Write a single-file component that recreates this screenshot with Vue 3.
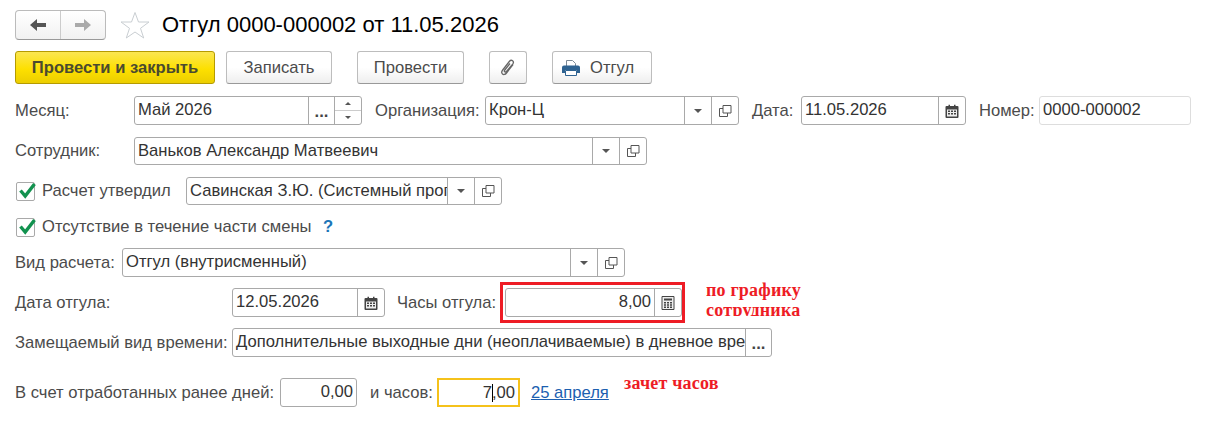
<template>
  <div class="page">
    <!-- иконки -->
    <svg class="defs" width="0" height="0">
      <symbol id="i-open" viewBox="0 0 14 14">
        <path d="M5 4.500H1.500v8h8V9" fill="none" stroke="#555" stroke-width="1" />
        <path d="M5 1.500h8v7.500H5z" fill="#fff" stroke="#555" stroke-width="1" />
      </symbol>
      <symbol id="i-cal" viewBox="0 0 13 14">
        <path d="M1 2h2V.7h1.500V2h4V.7H10V2h2a1 1 0 0 1 1 1v10a1 1 0 0 1-1 1H1a1 1 0 0 1-1-1V3a1 1 0 0 1 1-1z" fill="#444" />
        <path d="M1.500 5.500h10v7h-10z" fill="#eee" />
        <path d="M2.500 6.500h2v1.500h-2zM5.500 6.500h2v1.500h-2zM8.500 6.500h2v1.500h-2zM2.500 9h2v1.500h-2zM5.500 9h2v1.500h-2zM8.500 9h2v1.500h-2z" fill="#444" />
      </symbol>
      <symbol id="i-check" viewBox="0 0 17 17">
        <path d="M1.500 8.500 6.200 14 15.500 2" fill="none" stroke="#12924f" stroke-width="3.400" />
      </symbol>
    </svg>

    <div class="head">
      <div class="nav">
        <div class="nav-btn nav-left">
          <svg width="18" height="14" viewBox="0 0 18 14"><path d="M8 1 1 7l7 6V9h9V5H8z" fill="#555" /></svg>
        </div>
        <div class="nav-btn">
          <svg width="18" height="14" viewBox="0 0 18 14"><path d="M10 1l7 6-7 6V9H1V5h9z" fill="#aaa" /></svg>
        </div>
      </div>
      <svg class="star" width="30" height="28" viewBox="0 0 30 28">
        <path d="M15 1.500 18.500 11H29l-8.500 6.300 3.200 9.700L15 21l-8.700 6 3.200-9.700L1 11h10.500z" fill="#fff" stroke="#c9ced2" stroke-width="1" />
      </svg>
      <h1 class="title">Отгул 0000-000002 от 11.05.2026</h1>
    </div>

    <div class="toolbar">
      <button class="btn btn-main">Провести и закрыть</button>
      <button class="btn w-write">Записать</button>
      <button class="btn w-post">Провести</button>
      <button class="btn w-clip">
        <svg width="16" height="18" viewBox="0 0 16 18">
          <path d="M13 5.500 6.500 14c-1.300 1.700-3 1.900-4 1-1.100-1-.9-2.600.2-4l6.600-8.500c1-1.200 2.300-1.500 3.300-.7s1 2.100.1 3.300L6.500 12.300c-.6.700-1.300.9-1.800.5s-.4-1.100.1-1.800L10 4.500" fill="none" stroke="#666" stroke-width="1.300" />
        </svg>
      </button>
      <button class="btn w-print">
        <svg width="18" height="16" viewBox="0 0 18 16">
          <path d="M4.500.5h6l3 3v4h-9z" fill="#fff" stroke="#7d8a96" />
          <path d="M2 5.500h14a2 2 0 0 1 2 2V13h-3v-3H3v3H0V7.500a2 2 0 0 1 2-2z" fill="#2f6391" />
          <path d="M3.500 10.500h11v5h-11z" fill="#fff" stroke="#2f6391" />
        </svg>
        <span>Отгул</span>
      </button>
    </div>

    <div class="row r1">
      <label class="lbl l-month">Месяц:</label>
      <div class="field f-month">
        <span class="val">Май 2026</span>
        <span class="act dots">...</span>
        <span class="act spin"><i class="up"></i><i class="down"></i></span>
      </div>
      <label class="lbl l-org">Организация:</label>
      <div class="field f-org">
        <span class="val">Крон-Ц</span>
        <span class="act"><i class="tri"></i></span>
        <span class="act"><svg class="ico"><use href="#i-open" /></svg></span>
      </div>
      <label class="lbl l-date">Дата:</label>
      <div class="field f-date">
        <span class="val">11.05.2026</span>
        <span class="act"><svg class="ico"><use href="#i-cal" /></svg></span>
      </div>
      <label class="lbl l-num">Номер:</label>
      <div class="field f-num readonly"><span class="val">0000-000002</span></div>
    </div>

    <div class="row r2">
      <label class="lbl l-month">Сотрудник:</label>
      <div class="field f-emp">
        <span class="val">Ваньков Александр Матвеевич</span>
        <span class="act"><i class="tri"></i></span>
        <span class="act"><svg class="ico"><use href="#i-open" /></svg></span>
      </div>
    </div>

    <div class="row r3">
      <span class="chk"><svg width="17" height="17"><use href="#i-check" /></svg></span>
      <label class="lbl l-appr">Расчет утвердил</label>
      <div class="field f-appr">
        <span class="val">Савинская З.Ю. (Системный программист)</span>
        <span class="act"><i class="tri"></i></span>
        <span class="act"><svg class="ico"><use href="#i-open" /></svg></span>
      </div>
    </div>

    <div class="row r4">
      <span class="chk"><svg width="17" height="17"><use href="#i-check" /></svg></span>
      <label class="lbl l-part">Отсутствие в течение части смены</label>
      <span class="hint">?</span>
    </div>

    <div class="row r5">
      <label class="lbl l-kind">Вид расчета:</label>
      <div class="field f-kind">
        <span class="val">Отгул (внутрисменный)</span>
        <span class="act"><i class="tri"></i></span>
        <span class="act"><svg class="ico"><use href="#i-open" /></svg></span>
      </div>
    </div>

    <div class="row r6">
      <label class="lbl l-off">Дата отгула:</label>
      <div class="field f-off">
        <span class="val">12.05.2026</span>
        <span class="act"><svg class="ico"><use href="#i-cal" /></svg></span>
      </div>
      <label class="lbl l-hrs">Часы отгула:</label>
      <div class="field f-hrs">
        <span class="val right">8,00</span>
        <span class="act">
          <svg class="ico" viewBox="0 0 13 14">
            <path d="M.5.500h12v13H.500z" fill="#eee" stroke="#444" />
            <path d="M2.500 2.500h8v2h-8z" fill="#444" />
            <path d="M2.500 6h2v1.500h-2zM5.500 6h2v1.500h-2zM8.500 6h2v1.500h-2zM2.500 8.300h2v1.500h-2zM5.500 8.300h2v1.500h-2zM8.500 8.300h2v1.500h-2zM2.500 10.600h2v1.500h-2zM5.500 10.600h2v1.500h-2zM8.500 10.600h2v1.500h-2z" fill="#444" />
          </svg>
        </span>
        <div class="red-box"></div>
      </div>
      <div class="note note-hrs">по графику<br />сотрудника</div>
    </div>

    <div class="row r7">
      <label class="lbl l-off">Замещаемый вид времени:</label>
      <div class="field f-repl">
        <span class="val">Дополнительные выходные дни (неоплачиваемые) в дневное время</span>
        <span class="act dots">...</span>
      </div>
    </div>

    <div class="row r8">
      <label class="lbl l-days">В счет отработанных ранее дней:</label>
      <div class="field f-days"><span class="val right">0,00</span></div>
      <label class="lbl l-and">и часов:</label>
      <div class="field f-and active"><span class="val right">7<i class="caret"></i>,00</span></div>
      <a class="link">25 апреля</a>
      <div class="note note-off">зачет часов</div>
    </div>
  </div>
</template>

<style>
body {
  margin: 0;
  background: #fff;
}
</style>

<style scoped>
.page {
  width: 1206px;
  height: 422px;
  box-sizing: border-box;
  padding: 10px 0 0 15px;
  overflow: hidden;
  font-family: "Liberation Sans", Arial, sans-serif;
  font-size: 16.6px;
  color: #333;
  background: #fff;
}

.defs {
  position: absolute;
}

.head {
  display: flex;
  align-items: center;
  height: 30px;
}

.nav {
  display: flex;
  width: 91px;
  height: 30px;
  box-sizing: border-box;
  border: 1px solid #bbb;
  border-bottom-color: #999;
  border-radius: 4px;
  background: linear-gradient(#fff, #f1f1f1);
}

.nav-btn {
  flex: 1;
  display: flex;
  align-items: center;
  justify-content: center;
}

.nav-left {
  border-right: 1px solid #ccc;
}

.star {
  margin-left: 14px;
}

.title {
  margin: 0 0 0 12px;
  font-size: 22px;
  font-weight: 400;
  color: #000;
  white-space: nowrap;
}

.toolbar {
  display: flex;
  align-items: center;
  margin-top: 11px;
}

.btn {
  display: flex;
  align-items: center;
  justify-content: center;
  height: 33px;
  padding: 0;
  box-sizing: border-box;
  border: 1px solid #bdbdbd;
  border-bottom-color: #999;
  border-radius: 3px;
  background: linear-gradient(#fff, #fff 50%, #eee);
  font: inherit;
  color: #4b4b4b;
}

.btn-main {
  width: 200px;
  border-color: #b59b00;
  background: linear-gradient(#fbe651, #fde000 55%, #ecce00);
  font-weight: 700;
  color: #4a4a30;
}

.w-write {
  width: 106px;
  margin-left: 11px;
}

.w-post {
  width: 107px;
  margin-left: 25px;
}

.w-clip {
  width: 38px;
  margin-left: 25px;
}

.w-print {
  width: 100px;
  margin-left: 25px;
  padding-left: 9px;
  justify-content: flex-start;
  gap: 10px;
}

.row {
  position: relative;
  display: flex;
  align-items: center;
  height: 29px;
}

.r1 { margin-top: 12px; }
.r2 { margin-top: 12px; height: 28px; }
.r3 { margin-top: 12px; height: 28px; }
.r4 { margin-top: 8px; height: 28px; }
.r5 { margin-top: 7px; }
.r6 { margin-top: 11px; }
.r7 { margin-top: 11px; }
.r8 { margin-top: 21px; }

.lbl {
  flex: none;
  color: #4b4b4b;
  white-space: nowrap;
}

.l-month { width: 119px; }
.l-org { width: 110px; margin-left: 13px; }
.l-date { width: 49px; margin-left: 13px; }
.l-num { width: 60px; margin-left: 13px; }
.l-appr { width: 144px; margin-left: 7px; }
.l-part { width: 274px; margin-left: 7px; }
.l-kind { width: 107px; }
.l-off { width: 217px; }
.l-hrs { width: 108px; margin-left: 12px; }
.l-days { width: 265px; }
.l-and { width: 67px; margin-left: 13px; }

.field {
  position: relative;
  flex: none;
  align-self: stretch;
  display: flex;
  box-sizing: border-box;
  border: 1px solid #a9a9a9;
  border-radius: 3px;
  background: #fff;
}

.f-month { width: 228px; }
.f-org { width: 254px; }
.f-date { width: 165px; }
.f-num { width: 152px; }
.f-emp { width: 513px; }
.f-appr { width: 316px; }
.f-kind { width: 503px; }
.f-off { width: 153px; }
.f-hrs { width: 177px; }
.f-repl { width: 540px; }
.f-days { width: 77px; }
.f-and { width: 83px; }

.readonly {
  border-color: #ddd;
}

.active {
  border: 2px solid #f5c21b;
  border-radius: 0;
}

.val {
  flex: 1;
  min-width: 0;
  padding: 0 3px;
  overflow: hidden;
  line-height: 26px;
  white-space: nowrap;
  color: #333;
}

.right {
  text-align: right;
}

.active .val {
  line-height: 25px;
}

.caret {
  display: inline-block;
  width: 1px;
  height: 18px;
  margin-right: -1px;
  vertical-align: -4px;
  background: #000;
}

.act {
  flex: none;
  display: flex;
  align-items: center;
  justify-content: center;
  width: 26px;
  border-left: 1px solid #a9a9a9;
}

.dots {
  padding-top: 3px;
  box-sizing: border-box;
  font-weight: 700;
  color: #444;
}

.spin {
  flex-direction: column;
}

.spin i {
  flex: 1;
  display: flex;
  align-items: center;
  justify-content: center;
  width: 100%;
}

.spin .up {
  border-bottom: 1px solid #ccc;
}

.spin .up::after {
  content: "";
  border: 3px solid transparent;
  border-top: 0;
  border-bottom: 3px solid #555;
}

.spin .down::after {
  content: "";
  border: 3px solid transparent;
  border-bottom: 0;
  border-top: 3px solid #555;
}

.tri {
  border: 4px solid transparent;
  border-bottom: 0;
  border-top: 4px solid #555;
}

.ico {
  width: 14px;
  height: 14px;
}

.chk {
  position: relative;
  flex: none;
  width: 19px;
  height: 19px;
  margin-left: 1px;
  box-sizing: border-box;
  border: 1px solid #a9a9a9;
  border-radius: 2px;
}

.chk svg {
  position: absolute;
  top: -1px;
  left: 2px;
}

.hint {
  margin-left: 7px;
  font-weight: 700;
  color: #1c76b8;
}

.link {
  margin-left: 11px;
  color: #1c5fb0;
  text-decoration: underline;
  white-space: nowrap;
}

.red-box {
  position: absolute;
  top: -7px;
  right: -4px;
  bottom: -7px;
  left: -6px;
  border: 3px solid #ee1c25;
}

.note {
  position: absolute;
  font-family: "Liberation Serif", "Times New Roman", serif;
  font-size: 18px;
  font-weight: 700;
  line-height: 20px;
  letter-spacing: 0.2px;
  color: #ee1c25;
  white-space: nowrap;
}

/* нижняя строка подписи обрезана, как на исходном снимке */
.note-hrs {
  left: 691px;
  top: -8px;
  height: 36px;
  overflow: hidden;
}

.note-off {
  left: 609px;
  top: -5px;
}
</style>
